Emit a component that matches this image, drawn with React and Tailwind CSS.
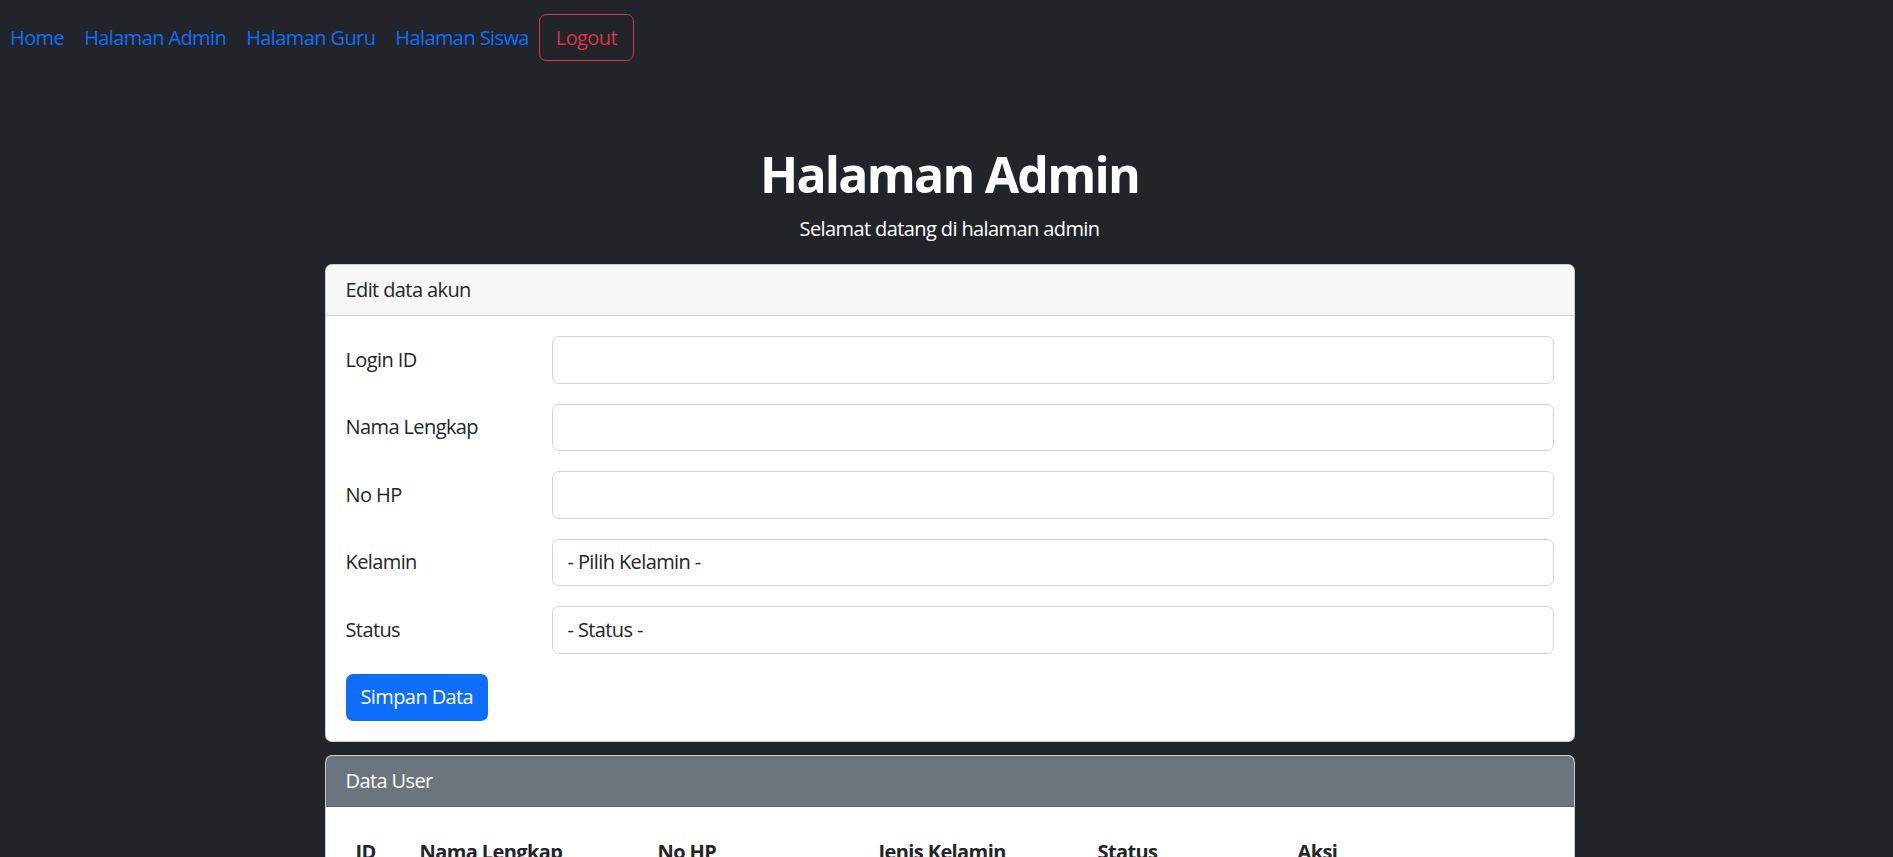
import React from 'react';

const navLinks = ['Home', 'Halaman Admin', 'Halaman Guru', 'Halaman Siswa'];

const fields = [
  { label: 'Login ID', type: 'input' },
  { label: 'Nama Lengkap', type: 'input' },
  { label: 'No HP', type: 'input' },
  { label: 'Kelamin', type: 'select', placeholder: '- Pilih Kelamin -' },
  { label: 'Status', type: 'select', placeholder: '- Status -' },
];

const columns = [
  { title: 'ID', w: 'w-[64px]' },
  { title: 'Nama Lengkap', w: 'w-[238px]' },
  { title: 'No HP', w: 'w-[221px]' },
  { title: 'Jenis Kelamin', w: 'w-[219px]' },
  { title: 'Status', w: 'w-[200px]' },
  { title: 'Aksi', w: '' },
];

const App = () => {
  return (
    <div className="min-h-screen bg-[#212529] text-[20px] leading-[30px] text-[#212529] font-['Open_Sans',sans-serif] tracking-[-0.6px] pb-10">
      {/* Navbar */}
      <nav className="flex items-center pt-[14px]">
        {navLinks.map((link) => (
          <a key={link} href="#" className="px-[10px] text-[#0d6efd]">
            {link}
          </a>
        ))}
        <button className="h-[47px] px-[16px] border border-[#dc3545] rounded-[7px] text-[#dc3545]">
          Logout
        </button>
      </nav>

      <div className="pl-[6px]">
        <div className="w-[1250px] mx-auto">
          {/* Title */}
          <h1 className="mt-[83px] text-center text-white font-bold text-[50px] leading-[60px] tracking-[-1.8px]">
            Halaman Admin
          </h1>
          <p className="mt-[10px] text-center text-white">Selamat datang di halaman admin</p>

          {/* Edit card */}
          <div className="mt-[20px] bg-white border border-black/20 rounded-[7px] overflow-hidden">
            <div className="px-[20px] py-[10px] bg-[#f7f7f7] border-b border-black/15">Edit data akun</div>
            <div className="p-[20px]">
              {fields.map((f) => (
                <div key={f.label} className="flex items-center mb-[20px]">
                  <label className="w-[206px] shrink-0">{f.label}</label>
                  {f.type === 'input' ? (
                    <input
                      type="text"
                      className="flex-1 h-[47.5px] px-[15px] border border-[#ced4da] rounded-[7px] outline-none"
                    />
                  ) : (
                    <select className="flex-1 h-[47.5px] px-[15px] border border-[#ced4da] rounded-[7px] bg-white appearance-none outline-none">
                      <option>{f.placeholder}</option>
                    </select>
                  )}
                </div>
              ))}
              <button className="h-[47.5px] px-[15px] bg-[#0d6efd] text-white rounded-[7px]">Simpan Data</button>
            </div>
          </div>

          {/* Data card */}
          <div className="mt-[13px] bg-white border border-black/20 rounded-[7px] overflow-hidden">
            <div className="px-[20px] py-[10px] bg-[#6c757d] text-white border-b border-black/15">Data User</div>
            <div className="p-[20px]">
              <table className="w-full border-collapse text-left">
                <thead>
                  <tr className="border-b-2 border-[#212529]">
                    {columns.map((c) => (
                      <th key={c.title} className={`${c.w} px-[10px] py-[10px] font-bold`}>
                        {c.title}
                      </th>
                    ))}
                  </tr>
                </thead>
                <tbody>
                  <tr className="border-b border-[#dee2e6]">
                    <td className="px-[10px] py-[10px]">1</td>
                    <td className="px-[10px] py-[10px]">Administrator</td>
                    <td className="px-[10px] py-[10px]">08123456789</td>
                    <td className="px-[10px] py-[10px]">Laki-laki</td>
                    <td className="px-[10px] py-[10px]">Admin</td>
                    <td className="px-[10px] py-[10px]">Edit</td>
                  </tr>
                </tbody>
              </table>
            </div>
          </div>
        </div>
      </div>
    </div>
  );
};

export default App;
